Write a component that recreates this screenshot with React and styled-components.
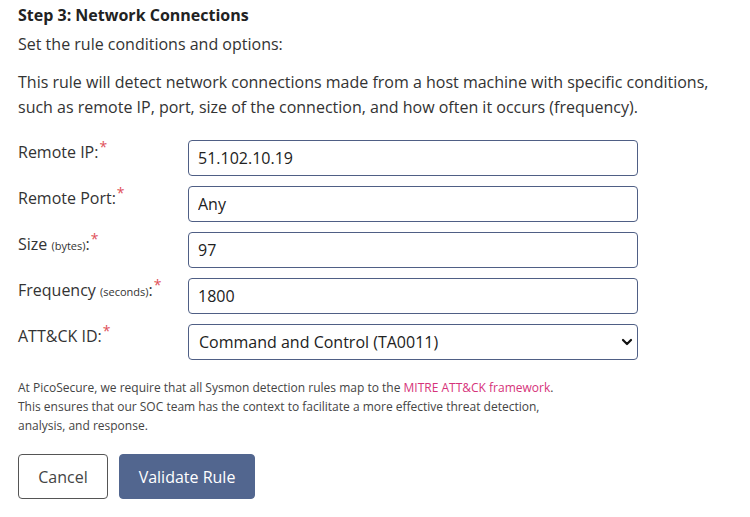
import React from 'react';
import styled, { createGlobalStyle } from 'styled-components';

const GlobalStyle = createGlobalStyle`
    body {
        margin: 0;
        background: #ffffff;
        font-family: "Open Sans", "Liberation Sans", sans-serif;
        color: #333333;
    }
`;

const Page = styled.div`
    padding: 3px 18px 0 18px;
`;

const Title = styled.h3`
    margin: 0;
    font-size: 16px;
    font-weight: 700;
    line-height: 24px;
    color: #222222;
`;

const Sub = styled.p`
    margin: 5px 0 0;
    font-size: 16px;
    line-height: 24px;
`;

const Intro = styled.p`
    margin: 14px 0 0;
    font-size: 16px;
    line-height: 25px;
`;

const Form = styled.div`
    margin-top: 20px;
    display: flex;
    flex-direction: column;
    gap: 10px;
`;

const Row = styled.div`
    display: flex;
    align-items: flex-start;
`;

const Label = styled.label`
    width: 170px;
    font-size: 16px;
    line-height: 24px;
`;

const Small = styled.span`
    font-size: 11px;
`;

const Req = styled.sup`
    color: #e0505a;
    font-size: 14px;
    vertical-align: top;
    line-height: 14px;
    margin-left: 1px;
`;

const Input = styled.input`
    box-sizing: border-box;
    width: 450px;
    height: 36px;
    padding: 0 9px;
    border: 1px solid #4f5f85;
    border-radius: 4px;
    font-family: "Open Sans", "Liberation Sans", sans-serif;
    font-size: 16px;
    color: #222222;
    background: #ffffff;
    outline: none;
`;

const SelectWrap = styled.div`
    position: relative;
    width: 450px;
`;

const Select = styled.select`
    box-sizing: border-box;
    width: 450px;
    height: 36px;
    padding: 0 10px;
    border: 1px solid #4f5f85;
    border-radius: 4px;
    font-family: "Open Sans", "Liberation Sans", sans-serif;
    font-size: 16px;
    color: #222222;
    background: #ffffff;
    appearance: none;
    outline: none;
`;

const Chevron = styled.svg`
    position: absolute;
    right: 5px;
    top: 14px;
    pointer-events: none;
`;

const Note = styled.p`
    margin: 18px 0 0;
    font-size: 12px;
    line-height: 19px;
    color: #444444;
`;

const Link = styled.a`
    color: #d6337a;
    text-decoration: none;
`;

const Buttons = styled.div`
    display: flex;
    gap: 11px;
    margin-top: 19px;
`;

const Button = styled.button`
    box-sizing: border-box;
    height: 45px;
    width: ${({ $primary }) => ($primary ? '136px' : '90px')};
    padding: 0;
    border-radius: 4px;
    border: 1px solid ${({ $primary }) => ($primary ? '#52668f' : '#555555')};
    background: ${({ $primary }) => ($primary ? '#52668f' : '#ffffff')};
    color: ${({ $primary }) => ($primary ? '#ffffff' : '#444444')};
    font-family: "Open Sans", "Liberation Sans", sans-serif;
    font-size: 16px;
    cursor: pointer;
`;

const fields = [
    { label: 'Remote IP:', value: '51.102.10.19' },
    { label: 'Remote Port:', value: 'Any' },
    { label: 'Size', small: '(bytes)', value: '97' },
    { label: 'Frequency', small: '(seconds)', value: '1800' },
];

const App = () => {
    return (
        <Page>
            <GlobalStyle />
            <Title>Step 3: Network Connections</Title>
            <Sub>Set the rule conditions and options:</Sub>
            <Intro>
                This rule will detect network connections made from a host machine with specific conditions,
                such as remote IP, port, size of the connection, and how often it occurs (frequency).
            </Intro>

            <Form>
                {fields.map((f) => (
                    <Row key={f.label}>
                        <Label>
                            {f.label}
                            {f.small && <> <Small>{f.small}</Small>:</>}
                            <Req>*</Req>
                        </Label>
                        <Input defaultValue={f.value} />
                    </Row>
                ))}
                <Row>
                    <Label>
                        ATT&amp;CK ID:<Req>*</Req>
                    </Label>
                    <SelectWrap>
                        <Select defaultValue="TA0011">
                            <option value="TA0011">Command and Control (TA0011)</option>
                        </Select>
                        <Chevron width="12" height="8" viewBox="0 0 12 8">
                            <path d="M2 2 L6 6 L10 2" fill="none" stroke="#111" strokeWidth="2.2" strokeLinecap="round" strokeLinejoin="round" />
                        </Chevron>
                    </SelectWrap>
                </Row>
            </Form>

            <Note>
                At PicoSecure, we require that all Sysmon detection rules map to the <Link href="#">MITRE ATT&amp;CK framework</Link>.
                <br />
                This ensures that our SOC team has the context to facilitate a more effective threat detection,
                <br />
                analysis, and response.
            </Note>

            <Buttons>
                <Button>Cancel</Button>
                <Button $primary>Validate Rule</Button>
            </Buttons>
        </Page>
    );
};

export default App;
